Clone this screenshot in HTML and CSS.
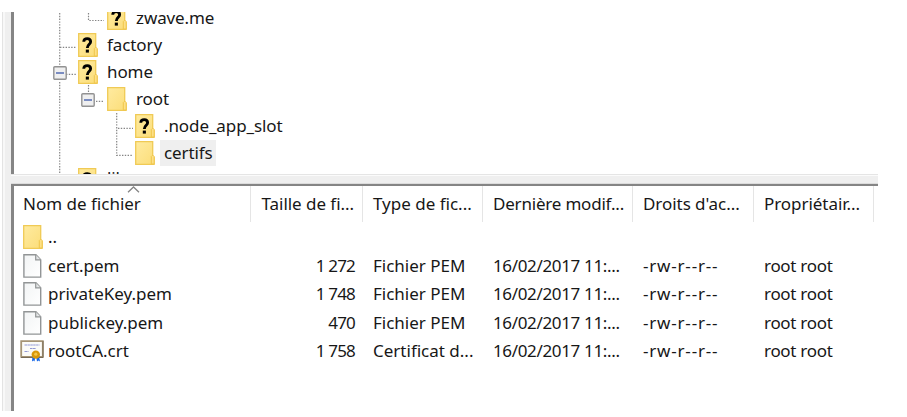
FILE: index.html
```
<!DOCTYPE html>
<html lang="fr">
<head>
<meta charset="utf-8">
<title>Fichiers</title>
<link rel="stylesheet" href="styles.css">
</head>
<body>
<svg class="defs" width="0" height="0">
  <defs>
    <linearGradient id="gold" x1="0" y1="0" x2="1" y2="1"><stop offset="0" stop-color="#ffeba0"/><stop offset="1" stop-color="#fbdd79"/></linearGradient>
    <linearGradient id="paper" x1="0" y1="0" x2="1" y2="1"><stop offset="0" stop-color="#f2f4f5"/><stop offset="1" stop-color="#ffffff"/></linearGradient>
    <symbol id="folder" viewBox="0 0 20 24">
      <path d="M.7.7h17v15l1.4 1v6.6H.7z" fill="url(#gold)" stroke="#f0ca55" stroke-width="1.3"/>
      <path d="M16.3 23v-7.5l1-1h1l.9 1V23z" fill="#fde086" stroke="#efc64c"/>
    </symbol>
    <symbol id="unknown" viewBox="0 0 20 24">
      <use href="#folder"/>
      <path d="M5.8 8.8C5.8 6.6 7 5.6 9.2 5.6S12.6 6.7 12.6 8.8C12.6 11.4 9.5 11.2 9.3 15" fill="none" stroke="#000" stroke-width="2.9"/>
      <path d="M7.8 16.6h3.1v3H7.8z"/>
    </symbol>
    <symbol id="file" viewBox="0 0 20 24">
      <path d="M.9.8h12l4.8 5v17.3H.9z" fill="url(#paper)" stroke="#929596" stroke-width="1.4"/>
      <path d="M12.7.8v5h5" fill="#e3e5e6" stroke="#929596" stroke-width="1.2"/>
    </symbol>
    <symbol id="cert" viewBox="0 0 24 22">
      <path d="M1.2 1.2h21.6v15.6H1.2z" fill="#fbfbf8" stroke="#a59475" stroke-width="1.8"/>
      <path d="M1 17.5h22V1" fill="none" stroke="#766a56"/>
      <path d="M4.5 5h15M10 8.5h6M4.5 11.5h4" stroke="#9299d6" stroke-width="1.2" stroke-dasharray="2.5 .4"/>
      <path d="M12.5 16h3l-1 5.4-1-1-1.5 1zM16 16h3l1 5.4-1.5-1-1.5 1z" fill="#1768e8"/>
      <circle cx="15.8" cy="14.6" r="4.2" fill="#d99808"/>
      <circle cx="15.8" cy="14.2" r="1.6" fill="#f2c64b"/>
    </symbol>
    <symbol id="minus" viewBox="0 0 14 14">
      <rect x=".8" y=".8" width="12.4" height="12.4" rx="1" fill="#efefef" stroke="#929292" stroke-width="1.4"/>
      <path d="M3 7h8" stroke="#4862ae" stroke-width="1.4"/>
    </symbol>
  </defs>
</svg>
<main class="window">
  <div class="gutter"></div>
  <div class="panes">
    <section class="tree">
      <svg class="guides" width="200" height="162" viewBox="14 12 200 162">
        <path d="M59.7 13V67M59.7 82V174M88.5 13V20.5H104M60 47.3H76M66 74.3H76M88.5 85V94M96 101.3H104M116.7 113V155.3H133M118 128.3H133"/>
      </svg>
      <div class="node l2"><svg class="ico"><use href="#unknown"/></svg><span class="t">zwave.me</span></div>
      <div class="node l1"><svg class="ico"><use href="#unknown"/></svg><span class="t">factory</span></div>
      <div class="node l1 open"><svg class="box"><use href="#minus"/></svg><svg class="ico"><use href="#unknown"/></svg><span class="t">home</span></div>
      <div class="node l2 open"><svg class="box"><use href="#minus"/></svg><svg class="ico"><use href="#folder"/></svg><span class="t">root</span></div>
      <div class="node l3"><svg class="ico"><use href="#unknown"/></svg><span class="t">.node_app_slot</span></div>
      <div class="node l3"><svg class="ico"><use href="#folder"/></svg><span class="t selected">certifs</span></div>
      <div class="node l1"><svg class="ico"><use href="#unknown"/></svg><span class="t last">lib</span></div>
    </section>
    <div class="splitter"></div>
    <section class="list">
      <svg class="sort" width="13" height="7" viewBox="0 0 13 7"><path d="M1 6.3 6.5 1 12 6.3"/></svg>
      <div class="row head"><span class="name">Nom de fichier</span><span class="size">Taille de fi...</span><span class="type">Type de fic...</span><span class="date">Dernière modif...</span><span>Droits d'ac...</span><span>Propriétair...</span></div>
      <div class="row"><span class="name"><svg class="ico"><use href="#folder"/></svg>..</span></div>
      <div class="row"><span class="name"><svg class="ico"><use href="#file"/></svg>cert.pem</span><span class="size">1 272</span><span class="type">Fichier PEM</span><span class="date">16/02/2017 11:...</span><span class="rights">-rw-r--r--</span><span>root root</span></div>
      <div class="row"><span class="name"><svg class="ico"><use href="#file"/></svg>privateKey.pem</span><span class="size">1 748</span><span class="type">Fichier PEM</span><span class="date">16/02/2017 11:...</span><span class="rights">-rw-r--r--</span><span>root root</span></div>
      <div class="row"><span class="name"><svg class="ico"><use href="#file"/></svg>publickey.pem</span><span class="size">470</span><span class="type">Fichier PEM</span><span class="date">16/02/2017 11:...</span><span class="rights">-rw-r--r--</span><span>root root</span></div>
      <div class="row"><span class="name"><svg class="ico cert"><use href="#cert"/></svg>rootCA.crt</span><span class="size">1 758</span><span class="type">Certificat d...</span><span class="date">16/02/2017 11:...</span><span class="rights">-rw-r--r--</span><span>root root</span></div>
    </section>
  </div>
</main>
</body>
</html>
```
FILE: styles.css
```
* { box-sizing: border-box; }
body { margin: 0; background: #fff; color: #171717; font: 17px/20px "Noto Sans", "Open Sans", sans-serif; }
.defs { display: block; height: 0; }
.window { display: flex; width: 876px; height: 399px; margin: 12px 0 0 2px; overflow: hidden; }
.gutter { width: 9px; background: linear-gradient(90deg, #e3e3e3 0 1px, #f8f8f8 1px 3px, #efefef 3px); }
.panes { flex: 1; min-width: 0; display: flex; flex-direction: column; }
.tree { position: relative; height: 162px; border-left: 3px solid #858585; overflow: hidden; letter-spacing: -0.1px; }
.guides { position: absolute; left: 0; top: 0; }
.guides path { fill: none; stroke: #858585; stroke-width: 1.2; stroke-dasharray: 1.4 1.4; }
.node { display: flex; align-items: center; height: 27px; position: relative; }
.guides + .node { margin-top: -8px; }
.l1 { padding-left: 64px; }
.l2 { padding-left: 93px; }
.l3 { padding-left: 121px; }
.l1.open { padding-left: 39px; }
.l2.open { padding-left: 67px; }
.box { width: 14px; height: 14px; margin: 3px 11px 0 0; }
.l2 .box { margin-right: 12px; }
.ico { flex: none; width: 20px; height: 24px; display: block; }
.t { margin-left: 5px; padding: 3px 4px; height: 26px; white-space: nowrap; }
.last { margin-top: -3px; }
.selected { background: #efefef; padding-right: 3px; }
.splitter { height: 10px; background: linear-gradient(#e5e5e5 0 1px, #fbfbfb 1px 2px, #efefef 2px 9px, #dcdcdc 9px); }
.list { position: relative; flex: 1; border-left: 3px solid #858585; border-top: 2px solid #858585; }
.sort { position: absolute; left: 113px; top: 0; }
.sort path { fill: none; stroke: #858585; stroke-width: 1.3; }
.row { display: grid; grid-template-columns: 237px 112px 120px 150px 121px 120px; height: 28.5px; align-items: center; white-space: nowrap; letter-spacing: -0.3px; }
.row > span { padding-left: 10px; }
.head { height: 36px; align-items: stretch; line-height: 35px; margin-bottom: 1px; letter-spacing: -0.05px; }
.head > span { border-right: 1px solid #e5e5e5; }
.row .name { display: flex; align-items: center; padding-left: 9px; letter-spacing: 0; }
.head .name { align-items: flex-start; }
.name .ico { margin-right: 5px; }
.name .cert { width: 24px; height: 22px; margin: 0 4px 0 -3px; }
.row .size { text-align: right; padding: 0 8px 0 0; }
.row:not(.head) .size { letter-spacing: -0.8px; }
.row .type { letter-spacing: 0; }
.row .date { letter-spacing: -0.35px; }
.head .date { letter-spacing: -0.2px; }
.row .rights { letter-spacing: 0.8px; }
```
